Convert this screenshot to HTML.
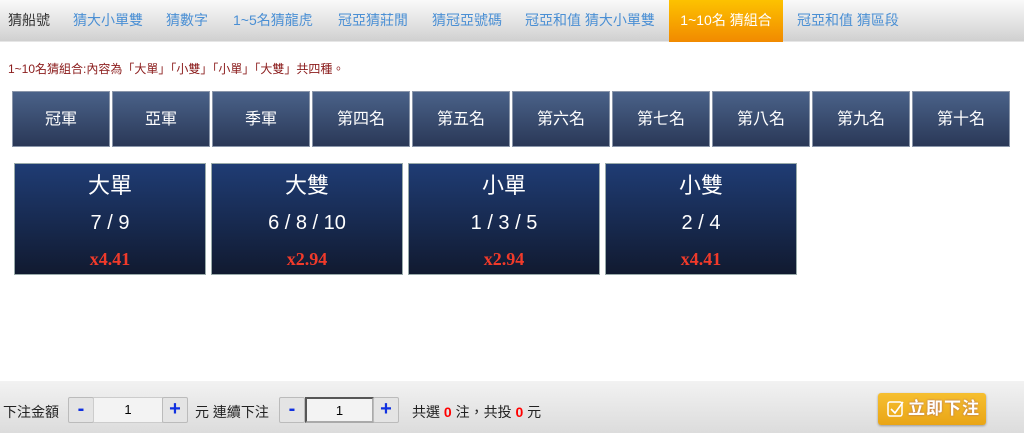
<!DOCTYPE html>
<html><head><meta charset="utf-8"><style>
*{margin:0;padding:0;box-sizing:border-box}
body{width:1024px;height:433px;background:#fff;font-family:"Liberation Sans","Noto Sans CJK TC",sans-serif;position:relative;overflow:hidden}
.nav{position:absolute;left:0;top:0;width:1024px;height:42px;background:linear-gradient(#fafafa,#d0d0d0);border-bottom:1px solid #e6e6e6}
.nav span{position:absolute;top:0;height:42px;line-height:40px;font-size:14px;color:#4a8fd4;white-space:nowrap}
.nav .act{background:linear-gradient(#fdc200,#f18a00);color:#fff;text-align:center}
.tip{position:absolute;left:8px;top:60px;font-size:12px;color:#8b1c1c}
.hd{position:absolute;top:91px;width:98px;height:56px;background:linear-gradient(#4a6289,#2a3857);color:#fff;font-size:16px;text-align:center;line-height:56px;border:1px solid #8a96aa}
.card{position:absolute;top:163px;width:192px;height:112px;background:linear-gradient(#1f3c74,#111a30);border:1px solid #9aa;color:#fff;text-align:center}
.card div{position:absolute;left:0;width:100%}
.card .a{font-size:22px;top:6px;height:32px;line-height:32px}
.card .b{font-size:20px;top:44px;height:30px;line-height:30px}
.card .c{font-family:"Liberation Serif",serif;font-weight:bold;color:#f03a2a;font-size:18px;top:82px;height:26px;line-height:26px}
.bot{position:absolute;left:0;top:381px;width:1024px;height:52px;background:linear-gradient(#f2f2f2,#dcdcdc)}
.t{position:absolute;top:21px;font-size:14px;color:#222;white-space:nowrap}
.btn{position:absolute;top:16px;width:26px;height:26px;background:#e4e4e4;border:1px solid #bbb;border-radius:2px;color:#1030e0;font-weight:bold;font-size:20px;text-align:center;line-height:22px}
.inp{position:absolute;top:16px;height:26px;background:#f3f3f3;border:1px solid #ccc;font-size:13px;text-align:center;line-height:24px}
.go{position:absolute;left:878px;top:12px;width:108px;height:32px;background:linear-gradient(#f6bf30,#e9a516);border-radius:3px;box-shadow:0 1px 2px #999;color:#fff;font-weight:bold;font-size:17px;line-height:32px;padding-left:30px;letter-spacing:1px;text-shadow:0 0 2px #a66}
</style></head><body>
<div class="nav">
<span style="left:8px;color:#333">猜船號</span>
<span style="left:73px">猜大小單雙</span>
<span style="left:166px">猜數字</span>
<span style="left:233px">1~5名猜龍虎</span>
<span style="left:338px">冠亞猜莊閒</span>
<span style="left:432px">猜冠亞號碼</span>
<span style="left:525px">冠亞和值 猜大小單雙</span>
<span class="act" style="left:669px;width:114px">1~10名 猜組合</span>
<span style="left:797px">冠亞和值 猜區段</span>
</div>
<div class="tip">1~10名猜組合:內容為「大單」「小雙」「小單」「大雙」共四種。</div>
<div class="hd" style="left:12px">冠軍</div><div class="hd" style="left:112px">亞軍</div><div class="hd" style="left:212px">季軍</div><div class="hd" style="left:312px">第四名</div><div class="hd" style="left:412px">第五名</div><div class="hd" style="left:512px">第六名</div><div class="hd" style="left:612px">第七名</div><div class="hd" style="left:712px">第八名</div><div class="hd" style="left:812px">第九名</div><div class="hd" style="left:912px">第十名</div>
<div class="card" style="left:14px"><div class="a">大單</div><div class="b">7 / 9</div><div class="c">x4.41</div></div>
<div class="card" style="left:211px"><div class="a">大雙</div><div class="b">6 / 8 / 10</div><div class="c">x2.94</div></div>
<div class="card" style="left:408px"><div class="a">小單</div><div class="b">1 / 3 / 5</div><div class="c">x2.94</div></div>
<div class="card" style="left:605px"><div class="a">小雙</div><div class="b">2 / 4</div><div class="c">x4.41</div></div>
<div class="bot">
<span class="t" style="left:3px">下注金額</span>
<div class="btn" style="left:68px">-</div><div class="inp" style="left:93px;width:70px">1</div><div class="btn" style="left:162px">+</div>
<span class="t" style="left:195px">元 連續下注</span>
<div class="btn" style="left:279px">-</div><div class="inp" style="left:305px;width:69px;border:2px inset #aaa">1</div><div class="btn" style="left:373px">+</div>
<span class="t" style="left:412px">共選 <b style="color:#f00">0</b> 注，共投 <b style="color:#f00">0</b> 元</span>
<div class="go"><svg style="position:absolute;left:9px;top:7px" width="18" height="18" viewBox="0 0 18 18"><rect x="1" y="2" width="14" height="14" rx="2" fill="none" stroke="#fff" stroke-width="1.5"/><path d="M4 9l4 4 8-11" fill="none" stroke="#fff" stroke-width="1.6"/></svg>立即下注</div>
</div>
</body></html>
